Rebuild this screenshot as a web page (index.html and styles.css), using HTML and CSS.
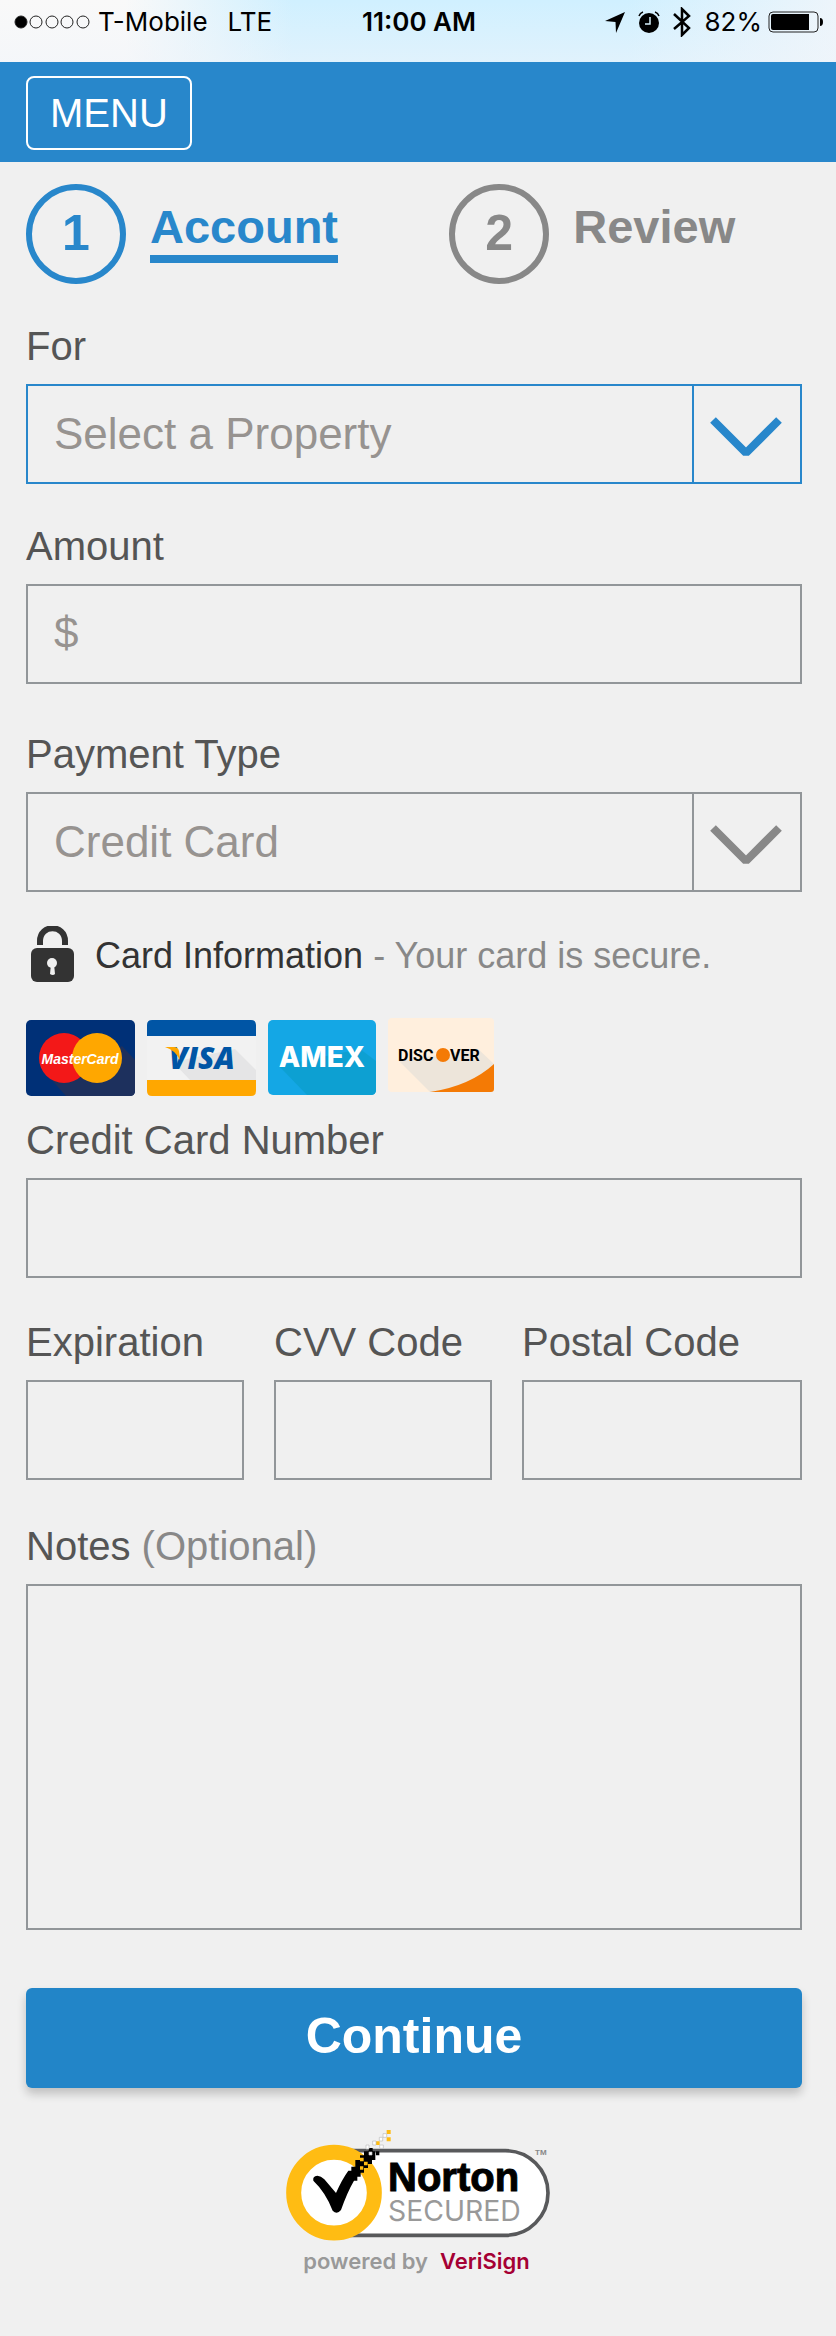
FILE: index.html
```
<!DOCTYPE html>
<html lang="en">
<head>
    <meta charset="UTF-8">
    <meta name="viewport" content="width=device-width, initial-scale=1">
    <title>Payment</title>
    <link rel="stylesheet" href="styles.css">
</head>
<body>

    <div class="status">
        <div class="status-left">
            <svg width="78" height="14" viewBox="0 0 78 14" fill="none" stroke="#222">
                <circle cx="7" cy="7" r="6" fill="#000"/>
                <circle cx="22" cy="7" r="6"/>
                <circle cx="38" cy="7" r="6"/>
                <circle cx="53" cy="7" r="6"/>
                <circle cx="69" cy="7" r="6"/>
            </svg>
            <span>T-Mobile</span>
            <span class="network">LTE</span>
        </div>
        <div class="time">11:00 AM</div>
        <div class="status-right">
            <svg width="20" height="21" viewBox="0 0 20 21"><path d="M20 0 11 21 10.500 10 0 9Z"/></svg>
            <svg class="alarm" width="22" height="22" viewBox="0 0 22 22">
                <circle cx="11" cy="12" r="10"/>
                <path d="M1 5Q2 2 5 1M17 1Q20 2 21 5" fill="none" stroke="#000" stroke-width="1.500"/>
                <path d="M12 6v7H7" fill="none" stroke="#d8f2fd" stroke-width="1.500"/>
            </svg>
            <svg class="bluetooth" width="18" height="30" viewBox="0 0 18 30"><path d="M1 7 16 21 9 28V2l7 7L1 22" fill="none" stroke="#000" stroke-width="2.500"/></svg>
            <span>82%</span>
            <svg class="battery" width="56" height="22" viewBox="0 0 56 22">
                <rect x="1" y="1" width="49" height="20" rx="4" fill="none" stroke="#222"/>
                <path d="M5 3H41V19H5Q3 19 3 17V5Q3 3 5 3Z"/>
                <path d="M52 7Q55 7 55 11T52 15Z"/>
            </svg>
        </div>
    </div>

    <header class="header">
        <button class="menu-btn" type="button">MENU</button>
    </header>

    <form class="form">
        <nav class="steps">
            <a class="step active" href="#account">
                <span class="step-number">1</span>
                <span class="step-name">Account</span>
            </a>
            <a class="step" href="#review">
                <span class="step-number">2</span>
                <span class="step-name">Review</span>
            </a>
        </nav>

        <div class="field">
            <label for="property">For</label>
            <div class="dropdown active">
                <select id="property">
                    <option>Select a Property</option>
                </select>
                <span class="arrow">
                    <svg width="76" height="44" viewBox="0 0 76 44"><path d="M5 3 38 36 71 3" fill="none" stroke="currentColor" stroke-width="8" stroke-linejoin="bevel"/></svg>
                </span>
            </div>
        </div>

        <div class="field amount">
            <label for="amount">Amount</label>
            <input class="box" id="amount" type="text" placeholder="$">
        </div>

        <div class="field">
            <label for="type">Payment Type</label>
            <div class="dropdown">
                <select id="type">
                    <option>Credit Card</option>
                </select>
                <span class="arrow">
                    <svg width="76" height="44" viewBox="0 0 76 44"><path d="M5 3 38 36 71 3" fill="none" stroke="currentColor" stroke-width="8" stroke-linejoin="bevel"/></svg>
                </span>
            </div>
        </div>

        <div class="secure">
            <svg width="44" height="56" viewBox="0 0 44 56">
                <path d="M9 19V15C9-2 34-2 34 15V19" fill="none" stroke="#333" stroke-width="6"/>
                <rect y="22" width="43" height="34" rx="6" fill="#333"/>
                <circle cx="21" cy="37" r="5" fill="#f0f0f0"/>
                <path d="M20 38h3l1 10q-2 2-5 0Z" fill="#f0f0f0"/>
            </svg>
            <p>Card Information <span class="muted">- Your card is secure.</span></p>
        </div>

        <div class="cards">
            <svg width="109" height="78" viewBox="0 0 109 78">
                <rect y="2" width="109" height="76" rx="5" fill="#003077"/>
                <path d="M96 28 109 42V73Q109 78 104 78H40L24 60Z" fill="#1d305d"/>
                <circle cx="38" cy="40" r="25" fill="#f31818"/>
                <circle cx="71" cy="40" r="25" fill="#ffa700"/>
                <text class="mastercard" x="54" y="46" text-anchor="middle">MasterCard</text>
            </svg>
            <svg width="109" height="78" viewBox="0 0 109 78">
                <rect y="2" width="109" height="76" rx="5" fill="#f2f2f2"/>
                <path d="M88 31 109 52V62H43L26 44Z" fill="#e5e5e6"/>
                <path d="M0 18V7Q0 2 5 2H104Q109 2 109 7V18Z" fill="#0055a5"/>
                <path d="M0 62V73Q0 78 5 78H104Q109 78 109 73V62Z" fill="#ffa700"/>
                <text class="visa" x="22" y="51">VISA</text>
                <path d="M18 29H27Q31 29 32 33L33 42Q28 32 18 29Z" fill="#ffa700"/>
            </svg>
            <svg width="108" height="78" viewBox="0 0 108 78">
                <rect y="2" width="108" height="75" rx="5" fill="#14a7e5"/>
                <path d="M92 31 108 43V72Q108 77 103 77H39L11 48Z" fill="#0da0d2"/>
                <text class="amex" x="54" y="49" text-anchor="middle">AMEX</text>
            </svg>
            <svg width="106" height="78" viewBox="0 0 106 78">
                <rect width="106" height="74" rx="4" fill="#ffefdd"/>
                <path d="M90 31 106 46V70H79L42 74 11 43Z" fill="#ede5da"/>
                <path d="M42 74Q82 68 106 46V71Q106 74 103 74Z" fill="#f47a05"/>
                <text class="discover" x="10" y="43">DISC</text>
                <circle cx="55" cy="37" r="7" fill="#f47a05"/>
                <text class="discover" x="62" y="43">VER</text>
            </svg>
        </div>

        <div class="field number">
            <label for="number">Credit Card Number</label>
            <input class="box" id="number" type="text">
        </div>

        <div class="row">
            <div class="field">
                <label for="expiration">Expiration</label>
                <input class="box" id="expiration" type="text">
            </div>
            <div class="field">
                <label for="cvv">CVV Code</label>
                <input class="box" id="cvv" type="text">
            </div>
            <div class="field">
                <label for="postal">Postal Code</label>
                <input class="box" id="postal" type="text">
            </div>
        </div>

        <div class="field notes">
            <label for="notes">Notes <span class="muted">(Optional)</span></label>
            <textarea class="box" id="notes"></textarea>
        </div>

        <button class="continue-btn" type="submit">Continue</button>
    </form>

    <footer class="footer">
        <svg width="264" height="144" viewBox="48 60 792 432">
            <path d="M192 122H706A128 127 0 0 1 706 376H192Z" fill="#fff" stroke="#58595b" stroke-width="11"/>
            <circle cx="192" cy="248" r="121" fill="#fff" stroke="#ffbc13" stroke-width="45"/>
            <!-- check mark breaking up into pixels -->
            <path d="M130 212Q127 199 142 197Q153 198 163 208L198 249Q216 208 235 182H244V170H256V150H270V136H282V124H296V114H308V124H318V136H328V124H316V150H306V162H294V174H282V188H272V200H262V212H252Q232 246 213 300Q201 315 188 302Q167 247 130 212Z"/>
            <path d="M270 143h11v11h-11zM282 155h11v11h-11zM270 169h10v10h-10zM318 94h11v11h-11zM350 60h12v12h-12zM350 82h12v12h-12z" fill="#ffbc13"/>
            <path d="M297 126h9v9h-9zM288 105h9v12h-9zM308 93h10v12h-10zM328 82h10v11h-10zM329 105h11v10h-11zM339 71h11v11h-11z" fill="#fff" stroke="#bbb" stroke-width="2"/>
            <text class="norton" x="354" y="244">Norton</text>
            <text class="secured" x="354" y="334">SECURED</text>
            <text class="tm" x="795" y="134">TM</text>
            <text class="powered" x="100" y="476">powered by</text>
            <text class="verisign" x="510" y="476">VeriSign</text>
        </svg>
    </footer>

</body>
</html>
```
FILE: styles.css
```
* { box-sizing: border-box; }
body {
    margin: 0;
    background: #f0f0f0;
    color: #555;
    font-family: "Liberation Sans", Arial, sans-serif;
    font-size: 40px;
}
button, input, select, textarea { font-family: inherit; }
svg { display: block; flex-shrink: 0; }

/* status bar */
.status {
    display: grid;
    grid-template-columns: 1fr auto 1fr;
    align-items: center;
    height: 62px;
    padding: 0 12px 18px 14px;
    background: linear-gradient(rgba(240, 244, 250, 0), rgba(240, 244, 250, 0.5)), linear-gradient(90deg, #f9f9f9 15%, #d0f0ff 35%, #d0f0ff 75%, #edf5fb);
    color: #000;
    font-family: Inter, sans-serif;
    font-size: 26px;
    line-height: 44px;
}
.status-left,
.status-right {
    display: flex;
    align-items: center;
}
.status-left span { margin-left: 6px; }
.status-left .network { margin-left: 20px; }
.status-right { justify-content: flex-end; }
.time { font-weight: 600; }
.alarm,
.bluetooth { margin-left: 13px; }
.status-right span { margin-left: 14px; }
.battery { margin-left: 6px; }

/* header */
.header {
    padding: 14px 26px 12px;
    background: #2887cb;
}
.menu-btn {
    display: block;
    height: 74px;
    padding: 0 22px;
    border: 2px solid #fff;
    border-radius: 8px;
    background: none;
    color: #fff;
    font-size: 40px;
}

/* steps */
.form { padding: 22px 34px 0 26px; }
.steps {
    display: grid;
    grid-template-columns: 6fr 5fr;
    margin-bottom: 38px;
}
.step {
    display: flex;
    align-items: center;
    gap: 24px;
    color: #888;
    font-weight: bold;
    text-decoration: none;
}
.step-number {
    width: 100px;
    height: 100px;
    border: 6px solid;
    border-radius: 50%;
    font-size: 50px;
    line-height: 86px;
    text-align: center;
}
.step-name {
    margin-bottom: 6px;
    border-bottom: 8px solid transparent;
    font-size: 47px;
    line-height: 56px;
}
.step.active { color: #2887cb; }
.step.active .step-name { border-color: #2887cb; }

/* fields */
.field { margin-bottom: 38px; }
.field.amount { margin-bottom: 46px; }
.field.number { margin-bottom: 40px; }
label {
    display: block;
    margin-bottom: 14px;
    line-height: 48px;
}
.box,
select {
    display: block;
    width: 100%;
    height: 100px;
    padding: 0 26px 2px;
    border: 2px solid #929699;
    border-radius: 0;
    background: none;
    color: #979390;
    font-size: 44px;
}
.box::placeholder { color: #979390; }
textarea.box {
    height: 346px;
    padding: 22px 26px;
    resize: none;
}
select { appearance: none; }
.dropdown {
    position: relative;
    color: #888;
}
.dropdown.active { color: #2887cb; }
.dropdown.active select { border-color: #2887cb; }
.arrow {
    position: absolute;
    top: 0;
    right: 0;
    display: flex;
    align-items: center;
    justify-content: center;
    width: 110px;
    height: 100%;
    padding: 10px 4px 0 0;
    border-left: 2px solid #929699;
    pointer-events: none;
}
.dropdown.active .arrow { border-color: #2887cb; }
.muted { color: #888; }

.secure {
    display: flex;
    align-items: center;
    gap: 20px;
    margin: -4px 0 36px;
    padding-left: 5px;
    color: #333;
    font-size: 36px;
}
.secure p { margin: 4px 0 0; }
.cards {
    display: flex;
    gap: 12px;
    margin-bottom: 20px;
}
.row {
    display: grid;
    grid-template-columns: 109fr 109fr 140fr;
    gap: 30px;
    margin-bottom: 42px;
}
.row .field { margin-bottom: 0; }
.field.notes { margin-bottom: 58px; }

.continue-btn {
    display: block;
    width: 100%;
    height: 100px;
    padding: 0 0 4px;
    border: 0;
    border-radius: 6px;
    background: #2285c8;
    box-shadow: 0 6px 10px rgba(0, 0, 0, 0.2);
    color: #fff;
    font-size: 50px;
    font-weight: bold;
}

.footer {
    display: flex;
    justify-content: center;
    padding: 42px 0 62px;
}

/* logos */
.mastercard {
    fill: #fff;
    font: italic bold 14px "Liberation Sans", sans-serif;
}
.visa {
    fill: #0055a5;
    font: italic 800 30px "Open Sans", sans-serif;
}
.amex {
    fill: #fff;
    font: 800 28px Inter, sans-serif;
}
.discover {
    fill: #000;
    font: bold 16px Roboto, sans-serif;
}
.norton {
    fill: #000;
    stroke: #000;
    stroke-width: 3px;
    font: bold 120px "Liberation Sans", sans-serif;
}
.secured {
    fill: #999;
    font: 85px Inter, sans-serif;
}
.tm {
    fill: #888;
    font: bold 24px "Liberation Sans", sans-serif;
}
.powered,
.verisign {
    fill: #999;
    font: 600 66px Inter, sans-serif;
}
.verisign { fill: #a50034; }
```
